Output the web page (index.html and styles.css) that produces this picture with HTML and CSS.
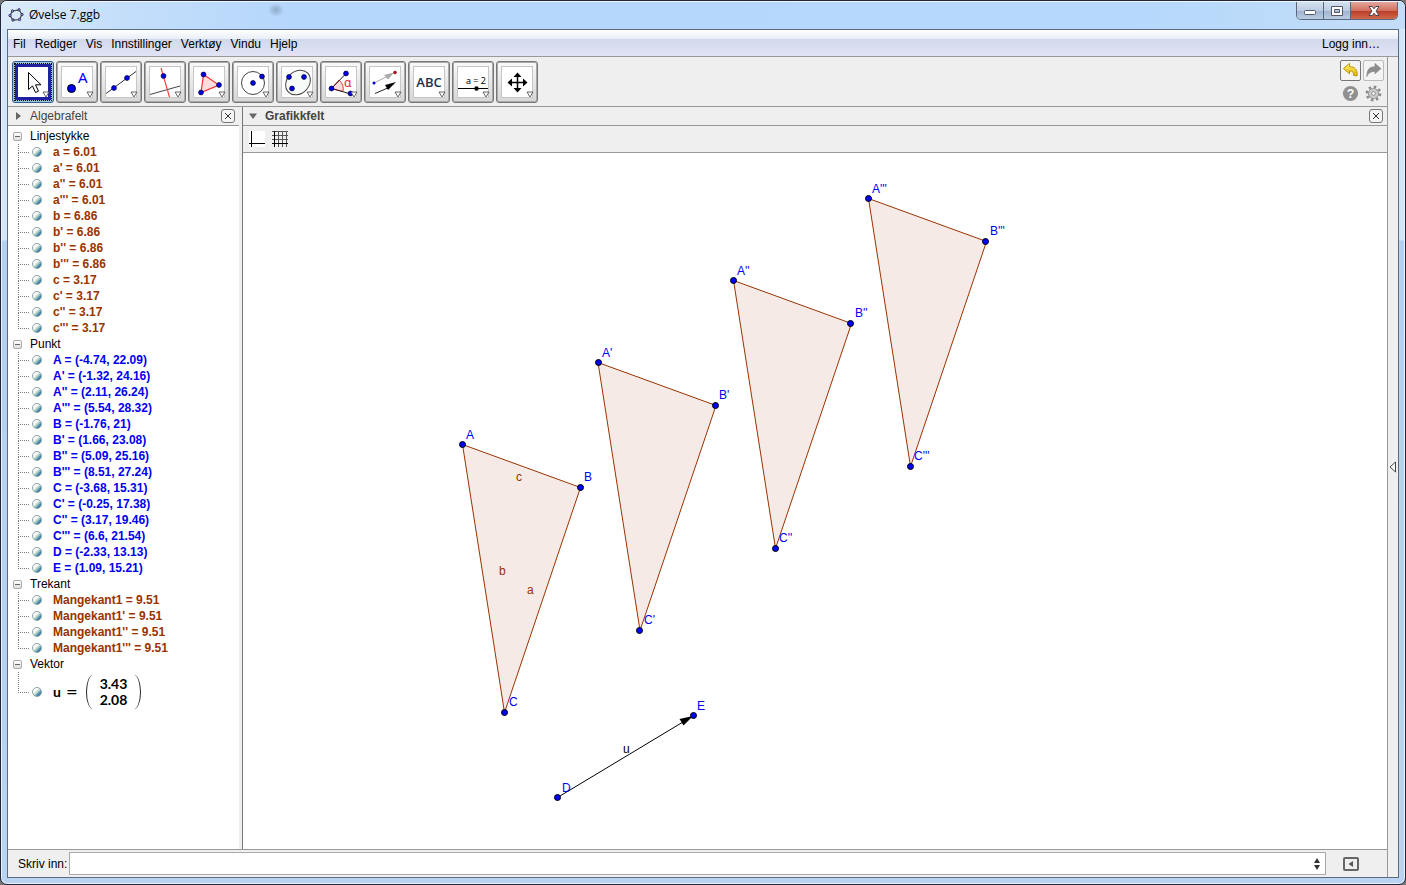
FILE: index.html
```html
<!DOCTYPE html>
<html lang="nb">
<head>
<meta charset="utf-8">
<title>Øvelse 7.ggb</title>
<link rel="stylesheet" href="styles.css">
</head>
<body>
<svg class="defs" aria-hidden="true">
  <defs>
    <linearGradient id="gold" x1="0" y1="0" x2="0" y2="1"><stop offset="0" stop-color="#fff27a"/><stop offset="1" stop-color="#e0b400"/></linearGradient>
    <path id="tri" d="M219.5 291.5 L337.5 334.5 L261.5 559.5 Z"/>
    <circle id="dot" r="3" fill="#00f" stroke="#000"/>
    <circle id="idot" r="2.4" fill="#00e" stroke="#000040" stroke-width=".8"/>
    <path id="more" d="M29 29 h6 l-3 5 z" fill="#fff" stroke="#555" stroke-width=".9"/>
  </defs>
</svg>
<div class="window">
  <header class="titlebar">
    <svg class="logo" width="16" height="16" viewBox="0 0 16 16"><path d="M4.500 4 L11 2.800 L14 7.500 L11.500 12.500 L5 13 L2 8.500 Z" fill="none" stroke="#444" stroke-width="1.2"/><g fill="#99f" stroke="#223" stroke-width=".8"><circle cx="4.500" cy="4" r="1.200"/><circle cx="11" cy="2.800" r="1.200"/><circle cx="14" cy="7.500" r="1.200"/><circle cx="11.500" cy="12.500" r="1.200"/><circle cx="5" cy="13" r="1.200"/><circle cx="2" cy="8.500" r="1.200"/></g></svg>
    <h1 class="title">Øvelse 7.ggb</h1>
    <div class="winctl">
      <button class="wbtn min" aria-label="Minimer"><svg width="14" height="12"><rect x="1.500" y="5.500" width="11" height="4" rx="1" fill="#fff" stroke="#50586a"/></svg></button>
      <button class="wbtn max" aria-label="Maksimer"><svg width="14" height="12"><path fill-rule="evenodd" d="M1.500 1.500h11v9h-11z M4.500 4.500h5v3h-5z" fill="#fff" stroke="#50586a"/></svg></button>
      <button class="wbtn close" aria-label="Lukk"><svg width="14" height="12" viewBox="0 0 14 12"><path d="M2 1.500h3.200L7 3.800 8.800 1.500H12L9 6l3 4.500H8.800L7 8.200 5.200 10.500H2L5 6z" fill="#fff" stroke="#53404a"/></svg></button>
    </div>
  </header>
  <div class="client">
    <nav class="menubar">
      <button>Fil</button><button>Rediger</button><button>Vis</button><button>Innstillinger</button><button>Verktøy</button><button>Vindu</button><button>Hjelp</button>
      <button class="login">Logg inn…</button>
    </nav>
    <div class="body">
      <main class="main">
        <div class="toolbar">
          <div class="tools">
            <button class="tool active" aria-label="Flytt"><svg viewBox="0 0 38 38"><path d="M14.500 9.500v17l4-3.500 3 6.500 3-1.300-3-6.400h5.500z" fill="#fff" stroke="#000"/><use href="#more"/></svg></button>
            <button class="tool" aria-label="Punkt"><svg viewBox="0 0 38 38"><circle cx="13.500" cy="25.500" r="4" fill="#00e" stroke="#000"/><text x="20" y="20" class="ti-a">A</text><use href="#more"/></svg></button>
            <button class="tool" aria-label="Linje"><svg viewBox="0 0 38 38"><path d="M4 30.500L34 8.500" stroke="#333"/><use href="#idot" x="12" y="25"/><use href="#idot" x="25" y="15"/><use href="#more"/></svg></button>
            <button class="tool" aria-label="Normal linje"><svg viewBox="0 0 38 38"><path d="M4 31.500L34 23" stroke="#444"/><path d="M15 5L23.500 34" stroke="#f44" stroke-width="1.200"/><use href="#idot" x="17.500" y="13"/><use href="#more"/></svg></button>
            <button class="tool" aria-label="Mangekant"><svg viewBox="0 0 38 38"><path d="M13.500 11.500L29 22 11 29.500z" fill="#fdd" stroke="#e33" stroke-width="1.200"/><use href="#idot" x="13.500" y="11.500"/><use href="#idot" x="29" y="22"/><use href="#idot" x="11" y="29.500"/><use href="#more"/></svg></button>
            <button class="tool" aria-label="Sirkel"><svg viewBox="0 0 38 38"><circle cx="19" cy="20" r="11.500" fill="none" stroke="#444"/><use href="#idot" x="19" y="20"/><use href="#idot" x="28" y="13.500"/><use href="#more"/></svg></button>
            <button class="tool" aria-label="Ellipse"><svg viewBox="0 0 38 38"><ellipse cx="20" cy="19.500" rx="13.500" ry="11" transform="rotate(-45 20 19.500)" fill="#f8fcf8" stroke="#444"/><use href="#idot" x="11" y="14"/><use href="#idot" x="26" y="14"/><use href="#idot" x="14" y="25.500"/><use href="#more"/></svg></button>
            <button class="tool" aria-label="Vinkel"><svg viewBox="0 0 38 38"><path d="M9.500 25.500L17 17A12 12 0 0 1 21 28.500z" fill="#fdd" stroke="#e33"/><path d="M24 10.500L9.500 25.500 29 31" fill="none" stroke="#222"/><text x="22" y="24" class="ti-alpha">α</text><use href="#idot" x="24" y="10.500"/><use href="#idot" x="9.500" y="25.500"/><use href="#idot" x="28.500" y="30.500"/><use href="#more"/></svg></button>
            <button class="tool" aria-label="Transformasjon"><svg viewBox="0 0 38 38"><path d="M8 20L24 12" stroke="#aaa"/><path d="M18 12l10-2.500-6 7z" fill="#aaa"/><path d="M9 30.500L24 24" stroke="#222"/><path d="M19 22l11-3-8 8z"/><circle cx="8" cy="20" r="1.500" fill="#00d"/><circle cx="29" cy="9.500" r="1.800" fill="#b01020"/><use href="#more"/></svg></button>
            <button class="tool" aria-label="Tekst"><svg viewBox="0 0 38 38"><text x="19" y="24" class="ti-abc">ABC</text><use href="#more"/></svg></button>
            <button class="tool" aria-label="Glider"><svg viewBox="0 0 38 38"><text x="22" y="21" class="ti-eq">a = 2</text><path d="M4 25.500h30" stroke="#000"/><circle cx="22.500" cy="25.500" r="2.200"/><use href="#more"/></svg></button>
            <button class="tool" aria-label="Flytt grafikkfeltet"><svg viewBox="0 0 38 38"><path d="M11 19.500h17M19.500 11v17" stroke="#000" stroke-width="1.500"/><path d="M19.500 9.500l4 4.500h-8zM19.500 29.500l4-4.500h-8zM9.500 19.500l4.500-4v8zM29.500 19.500l-4.500-4v8z"/><use href="#more"/></svg></button>
          </div>
          <div class="actions">
            <button class="act undo" aria-label="Angre"><svg viewBox="0 0 20 20"><path d="M2.500 8L9 2.500V6C14.500 6 17.500 9 17 15.500H13.500C13.500 12 12.500 10.500 9 10.500V13.500z" fill="url(#gold)" stroke="#b89400"/></svg></button>
            <button class="act redo" aria-label="Gjør om"><svg viewBox="0 0 20 20"><path d="M18 8L11.500 2.500V6C5.500 6 3 9 3 16.500C4.500 12.500 7 11 11.500 11V13.500z" fill="#8d8d8d" stroke="#858585" stroke-width=".6"/></svg></button>
            <button class="act plain" aria-label="Hjelp"><svg viewBox="0 0 20 20"><circle cx="10" cy="10" r="8" fill="#909090"/><text x="10" y="15" class="ti-q">?</text></svg></button>
            <button class="act plain" aria-label="Innstillinger"><svg viewBox="0 0 20 20"><circle cx="10" cy="10" r="7" fill="none" stroke="#8a8a8a" stroke-width="2.600" stroke-dasharray="2.750 2.750"/><circle cx="10" cy="10" r="5.300" fill="#ccc" stroke="#8a8a8a"/><circle cx="10" cy="10" r="2" fill="#f4f4f4" stroke="#8a8a8a"/></svg></button>
          </div>
        </div>
        <div class="views">
          <section class="algebra">
            <header class="vhead"><button class="fold right" aria-label="Stilrad"></button><h2>Algebrafelt</h2><button class="x" aria-label="Lukk Algebrafelt"><svg width="8" height="8"><path d="M1 1L7 7M7 1L1 7" stroke="#333"/></svg></button></header>
            <ul class="tree">
              <li><button class="tog" aria-label="Fold Linjestykke"></button>Linjestykke
                <ul class="brown"><li><i></i>a = 6.01</li><li><i></i>a' = 6.01</li><li><i></i>a'' = 6.01</li><li><i></i>a''' = 6.01</li><li><i></i>b = 6.86</li><li><i></i>b' = 6.86</li><li><i></i>b'' = 6.86</li><li><i></i>b''' = 6.86</li><li><i></i>c = 3.17</li><li><i></i>c' = 3.17</li><li><i></i>c'' = 3.17</li><li><i></i>c''' = 3.17</li></ul></li>
              <li><button class="tog" aria-label="Fold Punkt"></button>Punkt
                <ul class="blue"><li><i></i>A = (-4.74, 22.09)</li><li><i></i>A' = (-1.32, 24.16)</li><li><i></i>A'' = (2.11, 26.24)</li><li><i></i>A''' = (5.54, 28.32)</li><li><i></i>B = (-1.76, 21)</li><li><i></i>B' = (1.66, 23.08)</li><li><i></i>B'' = (5.09, 25.16)</li><li><i></i>B''' = (8.51, 27.24)</li><li><i></i>C = (-3.68, 15.31)</li><li><i></i>C' = (-0.25, 17.38)</li><li><i></i>C'' = (3.17, 19.46)</li><li><i></i>C''' = (6.6, 21.54)</li><li><i></i>D = (-2.33, 13.13)</li><li><i></i>E = (1.09, 15.21)</li></ul></li>
              <li><button class="tog" aria-label="Fold Trekant"></button>Trekant
                <ul class="brown"><li><i></i>Mangekant1 = 9.51</li><li><i></i>Mangekant1' = 9.51</li><li><i></i>Mangekant1'' = 9.51</li><li><i></i>Mangekant1''' = 9.51</li></ul></li>
              <li><button class="tog" aria-label="Fold Vektor"></button>Vektor
                <ul class="vec"><li><i></i><span class="u">u</span><span class="eq">=</span><span class="col"><span>3.43</span><span>2.08</span></span></li></ul></li>
            </ul>
          </section>
          <div class="split"></div>
          <section class="graphics">
            <header class="vhead"><button class="fold down" aria-label="Stilrad"></button><h2 class="strong">Grafikkfelt</h2><button class="x" aria-label="Lukk Grafikkfelt"><svg width="8" height="8"><path d="M1 1L7 7M7 1L1 7" stroke="#333"/></svg></button></header>
            <div class="stylebar">
              <button aria-label="Akser"><svg width="16" height="16"><path fill="#fff" d="M0 0h16v16H0z"/><path d="M2.500 0v16M0 12.500h16" stroke="#000"/></svg></button>
              <button aria-label="Rutenett"><svg width="16" height="16"><path d="M6.500 0v16M10.500 0v16M14.500 0v16M0 .5h16M0 4.500h16M0 8.500h16" stroke="#555"/><path d="M2.500 0v16M0 12.500h16" stroke="#000"/></svg></button>
            </div>
            <svg class="canvas">
              <g class="poly"><use href="#tri"/><use href="#tri" x="135.500" y="-82"/><use href="#tri" x="271" y="-164"/><use href="#tri" x="406" y="-246"/></g>
              <path d="M314.500 644.500L440 569" stroke="#000"/>
              <path d="M450 563l-9.500 9.500-4-6.500z"/>
              <g>
                <use href="#dot" x="219.500" y="291.500"/><use href="#dot" x="337.500" y="334.500"/><use href="#dot" x="261.500" y="559.500"/>
                <use href="#dot" x="355.500" y="209.500"/><use href="#dot" x="472.500" y="252.500"/><use href="#dot" x="396.500" y="477.500"/>
                <use href="#dot" x="490.500" y="127.500"/><use href="#dot" x="607.500" y="170.500"/><use href="#dot" x="532.500" y="395.500"/>
                <use href="#dot" x="625.500" y="45.500"/><use href="#dot" x="742.500" y="88.500"/><use href="#dot" x="667.500" y="313.500"/>
                <use href="#dot" x="314.500" y="644.500"/><use href="#dot" x="450.500" y="562.500"/>
              </g>
              <g class="lab">
                <text x="223" y="286">A</text><text x="341" y="328">B</text><text x="266" y="553">C</text>
                <text x="359" y="204">A'</text><text x="476" y="246">B'</text><text x="401" y="471">C'</text>
                <text x="494" y="122">A''</text><text x="612" y="164">B''</text><text x="536" y="389">C''</text>
                <text x="629" y="40">A'''</text><text x="747" y="82">B'''</text><text x="671" y="307">C'''</text>
                <text x="319" y="639">D</text><text x="454" y="557">E</text>
                <g class="side"><text x="273" y="328">c</text><text x="256" y="422">b</text><text x="284" y="441">a</text></g>
                <text x="380" y="600" class="blk">u</text>
              </g>
            </svg>
          </section>
        </div>
        <form class="inputbar">
          <label for="cmd">Skriv inn:</label>
          <div class="field"><input id="cmd" type="text"><svg width="8" height="12"><path d="M4 0l3 5H1zM4 12l3-5H1z" fill="#333"/></svg></div>
          <button type="button" class="hlp" aria-label="Kommandohjelp"><svg width="16" height="14"><rect x="1" y="1" width="14" height="12" rx="1" fill="#eee" stroke="#666" stroke-width="2"/><path d="M10 4v6L5.500 7z" fill="#555"/></svg></button>
        </form>
      </main>
      <aside class="side-strip"><button aria-label="Vis sidefelt"><svg width="7" height="12"><path d="M6.500 1v10L1 6z" fill="#fff" stroke="#444"/></svg></button></aside>
    </div>
  </div>
</div>
</body>
</html>
```
FILE: styles.css
```css
* { box-sizing: border-box; }
body { margin: 0; background: #777; font: 12px/16px "Liberation Sans", Arial, sans-serif; color: #000; }
button { font: inherit; color: inherit; margin: 0; padding: 0; border: 0; background: none; }
ul { list-style: none; margin: 0; padding: 0; }
h1, h2 { margin: 0; font: inherit; }
svg { display: block; }
.defs { position: absolute; width: 0; height: 0; }

.window { height: 100vh; display: flex; flex-direction: column; border: 1px solid #23263a; border-radius: 7px; padding: 0 6px 6px; background: linear-gradient(#d3e5f8, #d3e5f8 239px, #b5d0f0 240px, #b9d3f1); box-shadow: inset 0 0 0 1px #e8f3ff; overflow: hidden; }
.titlebar { display: flex; align-items: center; height: 28px; margin: 0 -6px; padding: 0 7px 2px; background: radial-gradient(ellipse 8px 7px at 275px 8px, #8ea9c8, transparent), linear-gradient(90deg, #dcebfa, #c4defa 120px, #b5d7fc 300px, #b5d8fc 80%, #c3ddf8); border-top: 1px solid #eef6ff; flex: none; }
.logo { flex: none; }
.title { flex: 1; margin-left: 5px; font-family: "Open Sans", sans-serif; }
.winctl { display: flex; align-self: flex-start; border: 1px solid #5b6780; border-top: 0; border-radius: 0 0 5px 5px; overflow: hidden; }
.wbtn { display: grid; place-items: center; width: 27px; height: 17px; background: linear-gradient(#d5e2f0, #bccde2 50%, #9db3cf 51%, #b9cce2); border-right: 1px solid #5b6780; }
.wbtn.close { width: 46px; border: 0; background: linear-gradient(#e3a79c, #d0705f 50%, #b93a26 51%, #d0694d); }

.client { flex: 1; min-height: 0; display: flex; flex-direction: column; border: 1px solid #5b6b82; background: #efefef; }
.menubar { display: flex; gap: 9px; align-items: center; height: 27px; padding: 2px 18px 0 5px; border-bottom: 1px solid #999; background: linear-gradient(#fff, #e8eef6 35%, #d2d9ec 36%, #e0e4f5); flex: none; }
.login { margin-left: auto; }
.body { flex: 1; min-height: 0; display: flex; }
.main { flex: 1; min-width: 0; display: flex; flex-direction: column; }
.side-strip { display: flex; align-items: center; justify-content: flex-start; width: 11px; padding-left: 1px; border-left: 1px solid #999; }

.toolbar { display: flex; justify-content: space-between; align-items: center; height: 50px; padding: 0 3px 0 4px; border-bottom: 1px solid #999; flex: none; }
.tools { display: flex; gap: 2px; }
.tool { width: 42px; height: 42px; padding: 1px; border: 1px solid #777; border-radius: 3px; background: linear-gradient(#fff, #fff) center / 30px 30px no-repeat, linear-gradient(#c6c6c6, #c6c6c6) center / 32px 32px no-repeat, linear-gradient(#fafafa, #d6d6d6); box-shadow: inset 0 0 0 1px #aaa; }
.tool.active { border-color: #2c6090; background: linear-gradient(#fff, #fff) center / 30px 30px no-repeat, linear-gradient(#2020a0, #2020a0) center / 36px 36px no-repeat, #9cc4dc; box-shadow: none; outline: 1px dotted #000; outline-offset: -3px; }
.tool svg { width: 38px; height: 38px; }
.tool text { font-family: "Noto Sans", sans-serif; }
.tool .ti-a { font-size: 15px; fill: #00f; }
.tool .ti-alpha { font-size: 12px; fill: #e22; }
.tool .ti-abc { font-family: "Open Sans", sans-serif; font-size: 13px; font-weight: 600; text-anchor: middle; fill: #1c3048; }
.tool .ti-eq { font-size: 9px; text-anchor: middle; }
.actions { display: grid; grid-template-columns: 21px 21px; gap: 2px; }
.act { width: 21px; height: 21px; border: 1px solid #777; border-radius: 2px; background: #f4f4f4; }
.act.redo { border-color: #bbb; }
.act.plain { border-color: transparent; background: none; }
.ti-q { font: bold 13px "Liberation Sans", sans-serif; text-anchor: middle; fill: #fff; }

.views { flex: 1; min-height: 0; display: flex; }
.algebra { width: 231px; display: flex; flex-direction: column; background: #fff; flex: none; }
.split { width: 4px; border-right: 1px solid #777; flex: none; }
.graphics { flex: 1; min-width: 0; display: flex; flex-direction: column; background: #fff; }
.vhead { display: flex; align-items: center; height: 19px; padding: 0 4px 0 6px; background: #efefef; border-bottom: 1px solid #999; color: #444; flex: none; }
.vhead h2 { flex: 1; margin-left: 8px; }
.vhead .strong { font-weight: bold; }
.fold { width: 8px; height: 8px; background: #666; }
.fold.right { clip-path: polygon(25% 0, 88% 50%, 25% 100%); }
.fold.down { clip-path: polygon(0 20%, 100% 20%, 50% 88%); }
.x { display: grid; place-items: center; width: 14px; height: 14px; border: 1px solid #777; border-radius: 3px; background: #f4f4f4; }
.stylebar { display: flex; align-items: center; gap: 7px; height: 27px; padding: 0 6px; background: #efefef; border-bottom: 1px solid #999; flex: none; }

.tree { padding: 2px 0 0 5px; }
.tree > li { padding-left: 17px; position: relative; }
.tog { position: absolute; left: 0; top: 4px; width: 9px; height: 9px; border: 1px solid #aaa; border-radius: 2px; background: linear-gradient(#666, #666) center / 5px 1px no-repeat, linear-gradient(#fff, #ddd); }
.tree ul { margin-left: -12px; font-weight: bold; }
.tree ul li { display: flex; align-items: center; height: 16px; padding-left: 14px; position: relative; }
.tree ul li::before { content: ""; position: absolute; left: 0; top: 0; width: 10px; height: 50%; border-left: 1px dotted #777; border-bottom: 1px dotted #777; }
.tree ul li:not(:last-child)::after { content: ""; position: absolute; left: 0; top: 50%; height: 50%; border-left: 1px dotted #777; }
.tree i { width: 10px; height: 10px; margin-right: 11px; border: 1px solid #8aa4a4; border-radius: 50%; background: linear-gradient(135deg, #fff 30%, #c4dccc 50%, #3c84b4 75%); flex: none; }
.brown { color: #993300; }
.blue { color: #0000f0; }
.tree .vec li { height: 40px; font: bold 14px/16px Lato, sans-serif; }
.vec .u { margin-right: 5px; }
.vec .eq { margin-right: 8px; font-family: "DejaVu Sans", sans-serif; font-weight: normal; }
.vec .col { display: flex; flex-direction: column; padding: 1px 14px; position: relative; }
.vec .col::before, .vec .col::after { content: ""; position: absolute; top: 0; bottom: 0; width: 6px; }
.vec .col::before { left: 0; border-left: 1px solid #222; border-radius: 100% 0 0 100% / 50% 0 0 50%; }
.vec .col::after { right: 0; border-right: 1px solid #222; border-radius: 0 100% 100% 0 / 0 50% 50% 0; }

.canvas { flex: 1; min-height: 0; width: 100%; }
.poly { fill: #993300; fill-opacity: .1; stroke: #993300; }
.lab { fill: #0000f0; font-size: 12px; }
.side { fill: #993300; }
.blk { fill: #000; }

.inputbar { display: flex; align-items: center; height: 28px; padding-left: 10px; border-top: 1px solid #999; flex: none; }
.field { flex: 1; display: flex; align-items: center; height: 23px; margin-left: 2px; padding-right: 4px; border: 1px solid #aaa; background: #fff; }
.field input { flex: 1; min-width: 0; border: 0; outline: 0; font: inherit; background: none; }
.hlp { margin: 0 28px 0 17px; }
```
